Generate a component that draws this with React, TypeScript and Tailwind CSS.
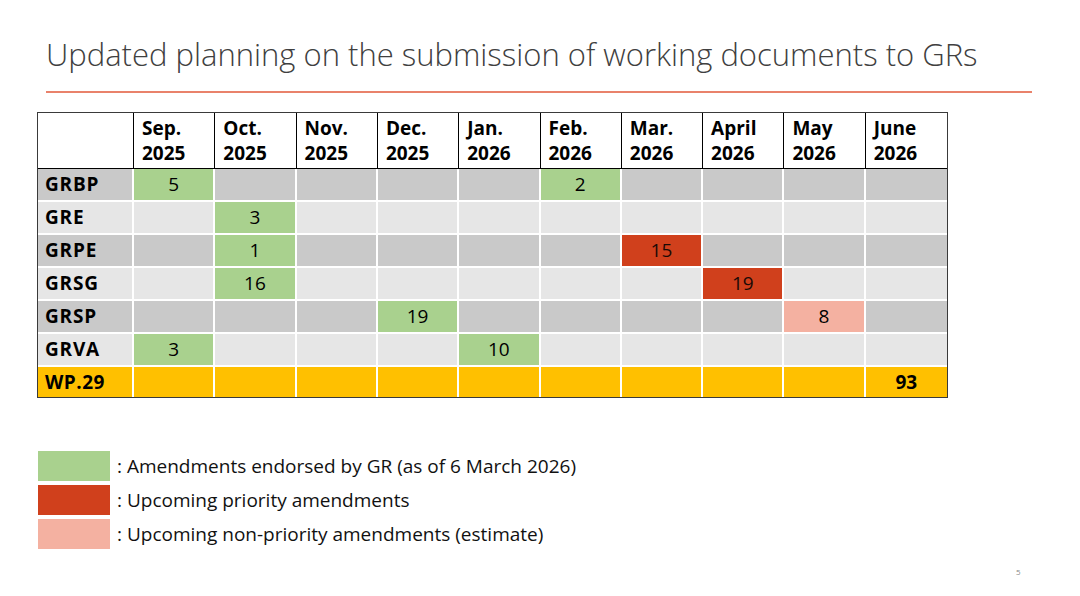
import React from "react"

type Tone = "green" | "red" | "pink"

const months = [
  ["Sep.", "2025"],
  ["Oct.", "2025"],
  ["Nov.", "2025"],
  ["Dec.", "2025"],
  ["Jan.", "2026"],
  ["Feb.", "2026"],
  ["Mar.", "2026"],
  ["April", "2026"],
  ["May", "2026"],
  ["June", "2026"],
]

// index = month column, value = [count, tone]
const rows: { name: string; cells: Record<number, [string, Tone]> }[] = [
  { name: "GRBP", cells: { 0: ["5", "green"], 5: ["2", "green"] } },
  { name: "GRE", cells: { 1: ["3", "green"] } },
  { name: "GRPE", cells: { 1: ["1", "green"], 6: ["15", "red"] } },
  { name: "GRSG", cells: { 1: ["16", "green"], 7: ["19", "red"] } },
  { name: "GRSP", cells: { 3: ["19", "green"], 8: ["8", "pink"] } },
  { name: "GRVA", cells: { 0: ["3", "green"], 4: ["10", "green"] } },
]

const toneClass: Record<Tone, string> = {
  green: "bg-[#a9d18e]",
  red: "bg-[#d0401c]",
  pink: "bg-[#f4b1a1]",
}

const cols = "grid grid-cols-[96px_repeat(10,1fr)]"

export default function App() {
  return (
    <div
      className="relative flex h-[596px] w-[1080px] flex-col overflow-hidden bg-white text-black"
      style={{ fontFamily: '"Open Sans", "Noto Sans", sans-serif' }}
    >
      {/* Title */}
      <h1 className="pl-[46px] pt-[33px] text-[31px] font-light leading-[42px] text-[#404040]">
        Updated planning on the submission of working documents to GRs
      </h1>
      <div className="ml-[46px] mt-[16px] h-[2px] w-[986px] bg-[#e9826b]" />

      {/* Table */}
      <div className="ml-[37px] mt-[19px] w-[911px] border-[1.5px] border-[#3a3a3a]">
        <div className={`${cols} h-[56px] border-b-[1.5px] border-black`}>
          <div className="border-r-[1.5px] border-black" />
          {months.map(([m, y], i) => (
            <div
              key={m}
              className={`flex flex-col justify-center pl-[8px] text-[19px] font-bold leading-[25px] ${
                i < 9 ? "border-r-[1.5px] border-black" : ""
              }`}
            >
              <span>{m}</span>
              <span>{y}</span>
            </div>
          ))}
        </div>

        {rows.map((row, r) => (
          <div
            key={row.name}
            className={`${cols} h-[33px] border-b-2 border-white ${
              r % 2 === 0 ? "bg-[#c9c9c9]" : "bg-[#e6e6e6]"
            }`}
          >
            <div className="flex items-center border-r-2 border-white pl-[7px] text-[19px] font-bold tracking-[0.8px]">
              {row.name}
            </div>
            {months.map((_, i) => {
              const cell = row.cells[i]
              return (
                <div
                  key={i}
                  className={`flex items-center justify-center text-[19px] ${
                    i < 9 ? "border-r-2 border-white" : ""
                  } ${cell ? toneClass[cell[1]] : ""} ${cell && cell[1] === "red" ? "text-[#1a0a06]" : ""}`}
                >
                  {cell ? cell[0] : ""}
                </div>
              )
            })}
          </div>
        ))}

        <div className={`${cols} h-[30px] bg-[#ffc000]`}>
          <div className="flex items-center border-r-2 border-white pl-[7px] text-[19px] font-bold tracking-[0.5px]">
            WP.29
          </div>
          {months.map((_, i) => (
            <div
              key={i}
              className={`flex items-center justify-center text-[19px] font-bold ${
                i < 9 ? "border-r-2 border-white" : ""
              }`}
            >
              {i === 9 ? "93" : ""}
            </div>
          ))}
        </div>
      </div>

      {/* Legend */}
      <div className="ml-[38px] mt-[53px] flex flex-col gap-[4px] text-[19px] leading-[30px] text-[#111]">
        <div className="flex items-center gap-[7px]">
          <div className="h-[30px] w-[72px] bg-[#a9d18e]" />
          <span>: Amendments endorsed by GR (as of 6 March 2026)</span>
        </div>
        <div className="flex items-center gap-[7px]">
          <div className="h-[30px] w-[72px] bg-[#d0401c]" />
          <span>: Upcoming priority amendments</span>
        </div>
        <div className="flex items-center gap-[7px]">
          <div className="h-[30px] w-[72px] bg-[#f4b1a1]" />
          <span>: Upcoming non-priority amendments (estimate)</span>
        </div>
      </div>

      <span className="absolute left-[1016px] top-[566px] text-[8px] text-[#8a8a8a]">5</span>
    </div>
  )
}
